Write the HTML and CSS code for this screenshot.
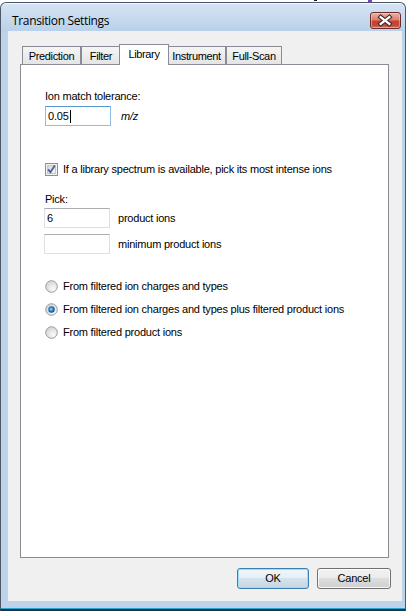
FILE: index.html
```html
<!DOCTYPE html>
<html>
<head>
<meta charset="utf-8">
<title>Transition Settings</title>
<link rel="stylesheet" href="styles.css">
</head>
<body>
<div class="desk"><span class="mark-a"></span><span class="mark-b"></span></div>
<div class="window">
  <div class="titlebar">
    <span class="title">Transition Settings</span>
    <div class="close">
      <svg width="31" height="17" viewBox="0 0 31 17">
        <path d="M11 5 L20 12 M20 5 L11 12" stroke="#3b2a2a" stroke-width="4.6" stroke-linecap="square" fill="none"/>
        <path d="M11 5 L20 12 M20 5 L11 12" stroke="#ffffff" stroke-width="2.4" stroke-linecap="square" fill="none"/>
      </svg>
    </div>
  </div>
  <div class="client">
    <div class="tabs">
      <div class="tab w-pred">Prediction</div>
      <div class="tab w-filter">Filter</div>
      <div class="tab selected w-lib">Library</div>
      <div class="tab w-inst">Instrument</div>
      <div class="tab w-full">Full-Scan</div>
    </div>
    <div class="panel">
      <div class="label">Ion match tolerance:</div>
      <div class="field-row">
        <div class="textbox focused">0.05<span class="caret"></span></div>
        <span class="unit">m/z</span>
      </div>
      <div class="check-row">
        <svg class="checkbox" width="13" height="13" viewBox="0 0 13 13">
          <defs>
            <linearGradient id="cbg" x1="0" y1="0" x2="1" y2="1">
              <stop offset="0" stop-color="#d2d5da"/>
              <stop offset="1" stop-color="#f8f8f8"/>
            </linearGradient>
          </defs>
          <rect x="0.5" y="0.5" width="12" height="12" fill="#f4f4f4" stroke="#8e8f8f"/>
          <rect x="2.5" y="2.5" width="8" height="8" fill="url(#cbg)" stroke="#c3c6cb"/>
          <path d="M3.2 6.4 L5.4 9.2 L9.8 2.6" stroke="#4a5f97" stroke-width="1.8" fill="none"/>
        </svg>
        <span class="check-text">If a library spectrum is available, pick its most intense ions</span>
      </div>
      <div class="label pick">Pick:</div>
      <div class="field-row pick-row">
        <div class="textbox">6</div>
        <span class="field-text">product ions</span>
      </div>
      <div class="field-row pick-row2">
        <div class="textbox"></div>
        <span class="field-text">minimum product ions</span>
      </div>
      <div class="radios">
        <div class="radio-row">
          <svg class="radio" width="13" height="13" viewBox="0 0 13 13">
            <defs>
              <radialGradient id="rbg" cx="0.65" cy="0.7" r="0.7">
                <stop offset="0" stop-color="#fbfbfb"/>
                <stop offset="1" stop-color="#d4d4d4"/>
              </radialGradient>
            </defs>
            <circle cx="6.5" cy="6.5" r="5.8" fill="url(#rbg)" stroke="#9a9c9e" stroke-width="1"/>
          </svg>
          <span>From filtered ion charges and types</span>
        </div>
        <div class="radio-row">
          <svg class="radio" width="13" height="13" viewBox="0 0 13 13">
            <defs>
              <radialGradient id="rdot" cx="0.45" cy="0.45" r="0.6">
                <stop offset="0" stop-color="#9fe0ff"/>
                <stop offset="0.45" stop-color="#2f8fd6"/>
                <stop offset="1" stop-color="#0c3670"/>
              </radialGradient>
            </defs>
            <circle cx="6.5" cy="6.5" r="5.8" fill="url(#rbg)" stroke="#9a9c9e" stroke-width="1"/>
            <circle cx="6.5" cy="6.5" r="3.2" fill="url(#rdot)"/>
          </svg>
          <span>From filtered ion charges and types plus filtered product ions</span>
        </div>
        <div class="radio-row">
          <svg class="radio" width="13" height="13" viewBox="0 0 13 13">
            <circle cx="6.5" cy="6.5" r="5.8" fill="url(#rbg)" stroke="#9a9c9e" stroke-width="1"/>
          </svg>
          <span>From filtered product ions</span>
        </div>
      </div>
    </div>
    <div class="buttons">
      <div class="btn default w-ok">OK</div>
      <div class="btn w-cancel">Cancel</div>
    </div>
  </div>
</div>
</body>
</html>
```
FILE: styles.css
```css
* { box-sizing: border-box; }
html, body { margin: 0; padding: 0; background: #ffffff; }
body {
  width: 408px;
  height: 611px;
  overflow: hidden;
  font-family: "Liberation Sans", Arial, sans-serif;
  font-size: 11px;
  letter-spacing: -0.22px;
  color: #000;
}

.desk { height: 2px; display: flex; align-items: flex-start; }
.mark-a { width: 3px; height: 1px; background: #1a1a1a; margin-left: 314px; }
.mark-b { width: 4px; height: 2px; background: #7b3fd0; margin-left: 51px; }

.window {
  width: 406px;
  height: 609px;
  border: 1px solid #4d5868;
  border-bottom: 2px solid #1d3347;
  border-radius: 6px 6px 0 0;
  background: linear-gradient(#d6e4f3, #bad1ea 28px, #bcd3ea 30px, #bcd3ea);
  box-shadow: inset 0 1px 0 rgba(255,255,255,0.7), inset 0 -1px 0 #2aa7cf;
  padding: 0 3px 8px 7px;
  display: flex;
  flex-direction: column;
}

.titlebar {
  height: 28px;
  display: flex;
  align-items: flex-start;
  flex: none;
}
.title {
  font-family: "Open Sans", "Noto Sans", sans-serif;
  font-size: 12px;
  letter-spacing: -0.35px;
  line-height: 16px;
  margin: 10px 0 0 4px;
  color: #000;
}
.close {
  margin: 9px 1px 0 auto;
  width: 31px;
  height: 17px;
  border: 1px solid #6b2d2a;
  border-radius: 3px;
  background: linear-gradient(#eab1a5, #dc7f6f 45%, #c9402f 55%, #c4493a 85%, #d4806c);
  box-shadow: inset 0 0 0 1px rgba(255,220,210,0.45);
  display: flex;
}
.close svg { display: block; margin: -1px 0 0 -1px; }

.client {
  width: 394px;
  height: 570px;
  background: #f0f0f0;
  padding: 13px 11px 0 12px;
  display: flex;
  flex-direction: column;
  align-items: flex-start;
  flex: none;
}

.tabs {
  display: flex;
  align-items: flex-end;
  height: 20px;
  margin-left: 2px;
  flex: none;
}
.tab {
  height: 18px;
  border: 1px solid #898c95;
  border-bottom: 0;
  background: linear-gradient(#f5f5f5, #e4e4e4);
  text-align: center;
  line-height: 13px;
  padding-top: 3px;
  letter-spacing: -0.35px;
  flex: none;
}
.tab.selected {
  height: 21px;
  margin: 0 -2px -1px;
  background: #ffffff;
  position: relative;
  z-index: 1;
  padding-top: 3px;
}
.w-pred { width: 59px; }
.w-filter { width: 40px; }
.w-lib { width: 50px; }
.w-inst { width: 59px; }
.w-full { width: 56px; }

.panel {
  width: 369px;
  height: 494px;
  border: 1px solid #898c95;
  background: #ffffff;
  padding: 25px 0 0 24px;
  flex: none;
}

.label { line-height: 13px; }
.field-row {
  display: flex;
  align-items: center;
  margin-top: 3px;
}
.textbox {
  width: 66px;
  height: 20px;
  border: 1px solid #dbdfe6;
  border-top-color: #abadb3;
  padding-left: 2px;
  display: flex;
  align-items: center;
  line-height: 13px;
  background: #fff;
}
.textbox.focused {
  border-color: #8fbde6;
  border-top-color: #5b97cf;
}
.caret {
  display: block;
  width: 1px;
  height: 13px;
  background: #000;
  margin-left: 1px;
}
.unit {
  font-style: italic;
  margin-left: 10px;
  line-height: 13px;
}
.field-text { margin-left: 8px; line-height: 13px; }

.check-row {
  display: flex;
  align-items: center;
  margin-top: 37px;
  height: 13px;
}
.checkbox { display: block; flex: none; }
.check-text { margin-left: 5px; line-height: 13px; margin-top: -1px; }

.pick { margin-top: 17px; }
.pick-row { margin-top: 2px; margin-left: -1px; }
.pick-row2 { margin-top: 6px; margin-left: -1px; }

.radios {
  margin-top: 26px;
  display: flex;
  flex-direction: column;
  gap: 10px;
}
.radio-row {
  display: flex;
  align-items: center;
  height: 13px;
  line-height: 13px;
}
.radio { display: block; flex: none; margin-right: 5px; }

.buttons {
  display: flex;
  gap: 8px;
  margin-top: 10px;
  align-self: flex-end;
}
.btn {
  height: 21px;
  border: 1px solid #707070;
  border-radius: 3px;
  background: linear-gradient(#f2f2f2, #ebebeb 50%, #dddddd 50%, #cfcfcf);
  box-shadow: inset 0 0 0 1px rgba(255,255,255,0.8);
  display: flex;
  align-items: center;
  justify-content: center;
  line-height: 13px;
}
.btn.default {
  border-color: #3c7fb1;
  box-shadow: inset 0 0 0 1px #9fdcf7;
  background: linear-gradient(#f0f6fa, #e6eff5 50%, #d4e2ec 50%, #c6d7e3);
}
.w-ok { width: 72px; }
.w-cancel { width: 74px; }
```
